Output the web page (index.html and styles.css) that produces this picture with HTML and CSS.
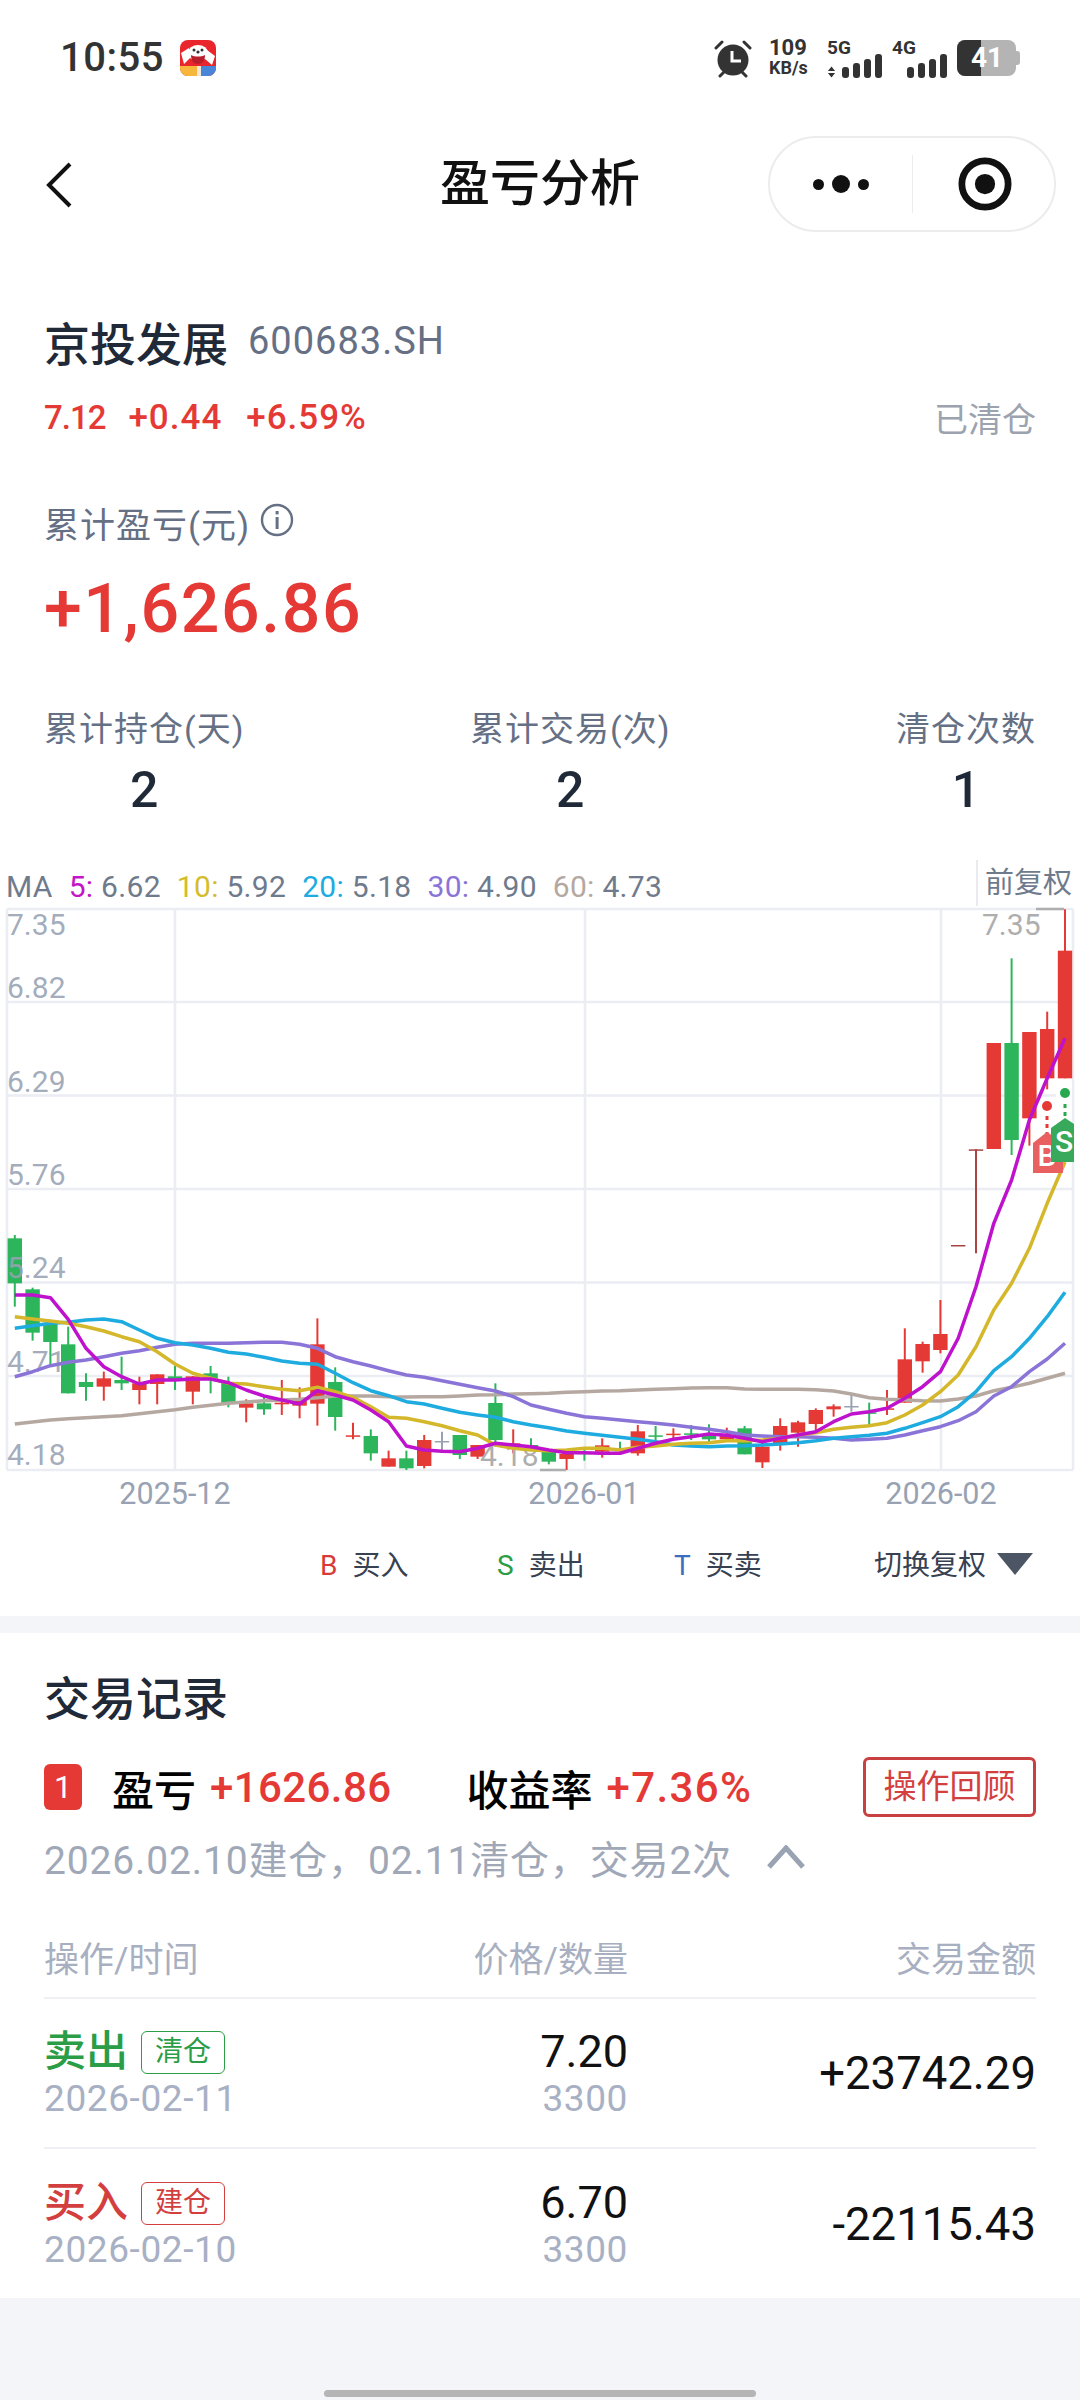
FILE: index.html
```html
<!DOCTYPE html>
<html lang="zh">
<head>
    <meta charset="UTF-8">
    <meta name="viewport" content="width=device-width, initial-scale=1.0">
    <title>盈亏分析</title>
    <link rel="stylesheet" href="styles.css">
</head>
<body>
    <div class="status-bar">
        <div class="status-left">
            <span class="clock">10:55</span>
            <svg class="app-icon" viewBox="0 0 36 36">
                <rect width="36" height="36" rx="8" fill="#e8262c"/>
                <path d="M0 26h17v10H8a8 8 0 0 1-8-8z" fill="#f6b73c"/>
                <path d="M21 26h15v2a8 8 0 0 1-8 8h-7z" fill="#4a86d8"/>
                <path d="M17 26h4v10h-4z" fill="#f4e6d8"/>
                <path d="M1 13l8-5 2 9-7 7zM35 16l-8-6-2 9 7 6z" fill="#fff"/>
                <ellipse cx="18" cy="13" rx="10" ry="8" fill="#fff"/>
                <path d="M11 15c4 2 10 2 14 0 0 6-3 9-7 9s-7-3-7-9z" fill="#b81f2a"/>
                <circle cx="14" cy="10" r="1.5" fill="#333"/>
                <circle cx="22" cy="10" r="1.5" fill="#333"/>
                <circle cx="18" cy="12" r="1.6" fill="#333"/>
            </svg>
        </div>
        <div class="status-right">
            <svg class="alarm" viewBox="0 0 38 38">
                <circle cx="19" cy="20" r="15.5" fill="#333"/>
                <path d="M2 8l6-6M36 8l-6-6M6 36l4-4M32 36l-4-4" stroke="#333" stroke-width="3" stroke-linecap="round"/>
                <path d="M18 11v10h9" fill="none" stroke="#fff" stroke-width="3"/>
            </svg>
            <div class="net-speed"><b>109</b><span>KB/s</span></div>
            <div class="signal">
                <b>5G</b>
                <svg class="updown" viewBox="0 0 10 12"><path d="M5 0l4 5H1zM5 12l4-5H1z" fill="#333"/></svg>
                <span class="bars">
                    <i class="b1"></i><i class="b2"></i><i class="b3"></i><i class="b4"></i>
                </span>
            </div>
            <div class="signal sim2">
                <b>4G</b>
                <span class="bars">
                    <i class="b1"></i><i class="b2"></i><i class="b3"></i><i class="b4"></i>
                </span>
            </div>
            <div class="battery"><div class="battery-fill"></div><span>41</span></div>
        </div>
    </div>

    <div class="nav-bar">
        <svg class="back" viewBox="0 0 28 46"><path d="M25 2L4 23l21 21" fill="none" stroke="#111" stroke-width="4"/></svg>
        <div class="nav-title">盈亏分析</div>
        <div class="capsule">
            <div class="capsule-part">
                <span class="dot small"></span><span class="dot"></span><span class="dot small"></span>
            </div>
            <div class="capsule-line"></div>
            <div class="capsule-part">
                <svg class="target" viewBox="0 0 56 56">
                    <circle cx="28" cy="28" r="24" fill="none" stroke="#111" stroke-width="7"/>
                    <circle cx="28" cy="28" r="10.5" fill="#111"/>
                </svg>
            </div>
        </div>
    </div>

    <section class="summary">
        <div class="stock-head">
            <span class="stock-name">京投发展</span>
            <span class="stock-code">600683.SH</span>
        </div>
        <div class="quote-row">
            <div class="quote">
                <span class="q-price">7.12</span>
                <span>+0.44</span>
                <span>+6.59%</span>
            </div>
            <span class="quote-state">已清仓</span>
        </div>
        <div class="profit-label">
            累计盈亏(元)
            <svg class="info" viewBox="0 0 34 34">
                <circle cx="17" cy="17" r="15" fill="none" stroke="#667085" stroke-width="2.4"/>
                <rect x="15.6" y="14" width="3" height="12" fill="#667085"/>
                <rect x="15.6" y="8" width="3" height="3.4" fill="#667085"/>
            </svg>
        </div>
        <div class="profit-value">+1,626.86</div>
        <div class="stats">
            <div class="stat"><div class="stat-label">累计持仓(天)</div><div class="stat-num">2</div></div>
            <div class="stat"><div class="stat-label">累计交易(次)</div><div class="stat-num">2</div></div>
            <div class="stat"><div class="stat-label">清仓次数</div><div class="stat-num">1</div></div>
        </div>
    </section>

    <section class="chart-box">
        <div class="ma-row">
            <div class="ma-list">
                <span>MA</span>
                <span class="ma-item"><em class="c5">5:</em> 6.62</span>
                <span class="ma-item"><em class="c10">10:</em> 5.92</span>
                <span class="ma-item"><em class="c20">20:</em> 5.18</span>
                <span class="ma-item"><em class="c30">30:</em> 4.90</span>
                <span class="ma-item"><em class="c60">60:</em> 4.73</span>
            </div>
            <div class="adjust">前复权</div>
        </div>
        <svg class="kline" viewBox="0 905 1080 610">
            <g class="grid">
                <path d="M7 909H1073M7 1002H1073M7 1095.5H1073M7 1189H1073M7 1282.5H1073M7 1376H1073M7 1470H1073"/>
                <path d="M7 909V1470M175 909V1470M585 909V1470M941 909V1470M1073 909V1470"/>
            </g>
            <g id="candles"></g>
            <g class="axis-y">
                <text x="7" y="935">7.35</text>
                <text x="7" y="998">6.82</text>
                <text x="7" y="1092">6.29</text>
                <text x="7" y="1185">5.76</text>
                <text x="7" y="1278">5.24</text>
                <text x="7" y="1372">4.71</text>
                <text x="7" y="1465">4.18</text>
            </g>
            <g class="extreme">
                <path d="M1036 909H1064M540 1470H566"/>
                <text x="982" y="935">7.35</text>
                <text x="480" y="1466">4.18</text>
            </g>
            <g id="lines"></g>
            <g class="trades">
                <rect x="1056" y="1082" width="16" height="36" fill="#fff"/>
                <circle cx="1047" cy="1106" r="5" fill="#e53935"/>
                <path d="M1047 1116V1134" stroke="#e53935" stroke-width="3" stroke-dasharray="4 4"/>
                <polygon points="1033,1143 1047,1132 1063,1143 1063,1173 1033,1173" fill="#e96060"/>
                <text x="1047" y="1166" class="tag-text">B</text>
                <circle cx="1065" cy="1093" r="5" fill="#2aa84f"/>
                <path d="M1065 1104V1118" stroke="#2aa84f" stroke-width="3" stroke-dasharray="4 4"/>
                <polygon points="1051,1128 1065,1118 1074,1124 1074,1162 1051,1162" fill="#38a95a"/>
                <text x="1064" y="1152" class="tag-text">S</text>
            </g>
            <g class="axis-x">
                <text x="175" y="1504">2025-12</text>
                <text x="584" y="1504">2026-01</text>
                <text x="941" y="1504">2026-02</text>
            </g>
        </svg>
        <div class="legend">
            <span class="legend-item"><b class="l-buy">B</b>买入</span>
            <span class="legend-item"><b class="l-sell">S</b>卖出</span>
            <span class="legend-item"><b class="l-both">T</b>买卖</span>
            <span class="legend-switch">切换复权<i class="tri"></i></span>
        </div>
    </section>

    <section class="records">
        <h2>交易记录</h2>
        <div class="round-head">
            <span class="round-no">1</span>
            <span class="round-key">盈亏</span>
            <span class="round-val">+1626.86</span>
            <span class="round-key rate">收益率</span>
            <span class="round-val pct">+7.36%</span>
            <span class="review">操作回顾</span>
        </div>
        <div class="round-sub">
            <span>2026.02.10建仓，02.11清仓，交易2次</span>
            <svg class="fold" viewBox="0 0 40 24"><path d="M3 22L20 3l17 19" fill="none" stroke="#9aa3b2" stroke-width="5"/></svg>
        </div>
        <div class="t-head">
            <span>操作/时间</span>
            <span>价格/数量</span>
            <span>交易金额</span>
        </div>
        <div class="t-row">
            <div class="t-op">
                <div class="t-op-top sell"><span class="t-side">卖出</span><span class="t-tag">清仓</span></div>
                <div class="t-sub">2026-02-11</div>
            </div>
            <div class="t-price"><div class="t-main">7.20</div><div class="t-sub">3300</div></div>
            <div class="t-amount">+23742.29</div>
        </div>
        <div class="t-row">
            <div class="t-op">
                <div class="t-op-top buy"><span class="t-side">买入</span><span class="t-tag">建仓</span></div>
                <div class="t-sub">2026-02-10</div>
            </div>
            <div class="t-price"><div class="t-main">6.70</div><div class="t-sub">3300</div></div>
            <div class="t-amount">-22115.43</div>
        </div>
    </section>

    <div class="home-area"><div class="home-bar"></div></div>

    <script src="chart.js"></script>
</body>
</html>
```

FILE: styles.css
```css
* {
    box-sizing: border-box;
}
body {
    margin: 0;
    width: 1080px;
    height: 2400px;
    background-color: #f4f5f9;
    font-family: Roboto, "Noto Sans CJK SC", sans-serif;
    color: #1f2937;
    display: flex;
    flex-direction: column;
    overflow: hidden;
}

/* status bar */
.status-bar {
    height: 116px;
    background-color: #fff;
    display: flex;
    justify-content: space-between;
    padding: 40px 61px 0 60px;
    color: #333;
}
.status-left {
    display: flex;
    align-items: flex-start;
    gap: 16px;
}
.clock {
    font-size: 40px;
    font-weight: 500;
    line-height: 36px;
    letter-spacing: 0.5px;
}
.app-icon {
    width: 36px;
    height: 36px;
}
.status-right {
    display: flex;
    align-items: flex-start;
    position: relative;
    width: 305px;
}
.alarm {
    width: 38px;
    height: 38px;
    margin-right: 17px;
}
.net-speed {
    width: 58px;
    display: flex;
    flex-direction: column;
    margin-top: -2px;
    line-height: 20px;
}
.net-speed b {
    font-size: 22px;
    font-weight: 700;
}
.net-speed span {
    font-size: 18px;
    font-weight: 700;
}
.signal {
    width: 54px;
    height: 38px;
    position: relative;
}
.signal b {
    position: absolute;
    left: 0;
    top: 0;
    font-size: 19px;
    line-height: 16px;
}
.sim2 {
    margin-left: 11px;
}
.updown {
    position: absolute;
    left: 0;
    bottom: 0;
    width: 9px;
    height: 12px;
}
.bars {
    position: absolute;
    left: 15px;
    bottom: 0;
    display: flex;
    align-items: flex-end;
    gap: 4px;
}
.bars i {
    width: 7px;
    background-color: #333;
    border-radius: 3px;
}
.bars .b1 { height: 11px; }
.bars .b2 { height: 15px; }
.bars .b3 { height: 19px; }
.bars .b4 { height: 24px; }
.battery {
    position: relative;
    width: 59px;
    height: 36px;
    margin-left: 11px;
    border-radius: 8px;
    background-color: #b4b4b4;
    overflow: visible;
}
.battery::after {
    content: "";
    position: absolute;
    right: -4px;
    top: 11px;
    width: 4px;
    height: 14px;
    border-radius: 0 3px 3px 0;
    background-color: #b4b4b4;
}
.battery-fill {
    width: 24px;
    height: 36px;
    background-color: #333;
    border-radius: 8px 0 0 8px;
}
.battery span {
    position: absolute;
    left: 14px;
    top: 0;
    font-size: 28px;
    line-height: 36px;
    font-weight: 700;
    color: #fff;
}

/* nav */
.nav-bar {
    height: 138px;
    background-color: #fff;
    position: relative;
    display: flex;
    align-items: flex-start;
    justify-content: space-between;
    padding: 20px 24px 0 45px;
}
.back {
    width: 28px;
    height: 46px;
    margin-top: 26px;
}
.nav-title {
    position: absolute;
    left: 0;
    right: 0;
    top: 36px;
    text-align: center;
    font-size: 50px;
    line-height: 64px;
    font-weight: 500;
    color: #111;
}
.capsule {
    width: 288px;
    height: 96px;
    border: 2px solid #ececec;
    border-radius: 48px;
    display: flex;
    align-items: center;
}
.capsule-part {
    flex: 1;
    display: flex;
    align-items: center;
    justify-content: center;
    gap: 8px;
}
.capsule-line {
    width: 1px;
    height: 58px;
    background-color: #ececec;
}
.dot {
    width: 18px;
    height: 18px;
    border-radius: 50%;
    background-color: #111;
}
.dot.small {
    width: 11px;
    height: 11px;
}
.target {
    width: 54px;
    height: 54px;
    margin-left: 3px;
}

/* summary */
.summary {
    height: 606px;
    background-color: #fff;
    padding: 60px 44px 0 44px;
}
.stock-head {
    display: flex;
    align-items: center;
    gap: 20px;
    height: 54px;
}
.stock-name {
    font-size: 46px;
    font-weight: 500;
}
.stock-code {
    font-size: 38px;
    color: #667085;
    letter-spacing: 1px;
}
.quote-row {
    display: flex;
    justify-content: space-between;
    align-items: center;
    margin-top: 24px;
    height: 50px;
}
.quote {
    display: flex;
    gap: 24px;
    font-size: 35px;
    font-weight: 500;
    color: #e53935;
    letter-spacing: 1px;
}
.q-price {
    font-size: 33px;
    letter-spacing: -1px;
    line-height: 41px;
    margin-right: -1px;
}
.quote-state {
    font-size: 34px;
    color: #9ca3af;
}
.profit-label {
    display: flex;
    align-items: center;
    gap: 10px;
    margin-top: 58px;
    height: 44px;
    font-size: 35px;
    letter-spacing: 1px;
    color: #667085;
}
.info {
    width: 34px;
    height: 34px;
    margin-top: -4px;
}
.profit-value {
    margin-top: 25px;
    font-size: 68px;
    line-height: 80px;
    font-weight: 500;
    color: #e53935;
    letter-spacing: 1.6px;
}
.stats {
    display: flex;
    justify-content: space-between;
    margin-top: 58px;
}
.stat {
    text-align: center;
}
.stat-label {
    font-size: 34px;
    line-height: 44px;
    color: #667085;
    letter-spacing: 1px;
}
.stat-num {
    margin-top: 9px;
    font-size: 50px;
    line-height: 60px;
    font-weight: 500;
}

/* chart */
.chart-box {
    height: 756px;
    background-color: #fff;
    margin-bottom: 17px;
    flex: none;
}
.ma-row {
    height: 45px;
    display: flex;
    justify-content: space-between;
    padding: 8px 8px 0 6px;
    font-size: 30px;
    line-height: 38px;
    color: #6f7b8c;
}
.ma-list {
    display: flex;
    gap: 16px;
    letter-spacing: 0.3px;
}
.ma-item em {
    font-style: normal;
}
.c5 { color: #c414c8; }
.c10 { color: #d4bd2c; }
.c20 { color: #1eabdf; }
.c30 { color: #8a74d8; }
.c60 { color: #b5a8a0; }
.adjust {
    width: 96px;
    height: 46px;
    margin-top: -8px;
    padding-left: 7px;
    font-size: 29px;
    line-height: 46px;
    white-space: nowrap;
    border-left: 2px solid #e9ebf1;
    color: #6f7b8c;
}
.kline {
    display: block;
    width: 1080px;
    height: 610px;
}
.grid path {
    fill: none;
    stroke: #ecedf3;
    stroke-width: 2.6;
}
.axis-y text {
    font-size: 30px;
    fill: #98a2b3;
    fill-opacity: 0.9;
}
.axis-x text {
    font-size: 30.5px;
    fill: #98a2b3;
    text-anchor: middle;
}
.extreme text {
    font-size: 30px;
    fill: #aeaeae;
}
.extreme path {
    fill: none;
    stroke: #aeaeae;
    stroke-width: 2.5;
}
.tag-text {
    font-size: 30px;
    font-weight: 500;
    fill: #fff;
    text-anchor: middle;
}
.legend {
    height: 101px;
    padding-top: 31px;
    display: flex;
    font-size: 28px;
    line-height: 40px;
    color: #374151;
}
.legend-item {
    display: flex;
    width: 177px;
    gap: 15px;
}
.legend-item:first-child {
    margin-left: 320px;
}
.legend-item b {
    font-weight: 400;
}
.l-buy { color: #d83a3a; }
.l-sell { color: #2a9d46; }
.l-both { color: #3a6fc0; }
.legend-switch {
    display: flex;
    margin-left: 23px;
    gap: 11px;
}
.tri {
    width: 0;
    height: 0;
    margin-top: 7px;
    border-left: 18px solid transparent;
    border-right: 18px solid transparent;
    border-top: 22px solid #4b5563;
}

/* trade records */
.records {
    height: 665px;
    background-color: #fff;
    padding: 0 44px;
    flex: none;
}
.records h2 {
    margin: 0;
    padding-top: 36px;
    font-size: 46px;
    line-height: 60px;
    font-weight: 500;
}
.round-head {
    display: flex;
    align-items: center;
    margin-top: 28px;
    height: 60px;
}
.round-no {
    width: 38px;
    height: 46px;
    background-color: #e53935;
    color: #fff;
    border-radius: 6px;
    text-align: center;
    font-size: 32px;
    line-height: 46px;
    margin-right: 30px;
}
.round-key {
    font-size: 42px;
    font-weight: 500;
    color: #000;
    margin-right: 14px;
}
.round-key.rate {
    margin-left: 75px;
}
.round-val {
    font-size: 42px;
    font-weight: 500;
    color: #e53935;
    letter-spacing: 0.4px;
}
.round-val.pct {
    letter-spacing: 1.4px;
}
.review {
    margin-left: auto;
    width: 173px;
    height: 60px;
    border: 3px solid #c94040;
    border-radius: 6px;
    color: #d33f3f;
    text-align: center;
    font-size: 33px;
    line-height: 54px;
}
.round-sub {
    display: flex;
    align-items: center;
    margin-top: 15px;
    gap: 34px;
    height: 50px;
    font-size: 39px;
    letter-spacing: 0.85px;
    color: #a0a8b8;
}
.fold {
    width: 40px;
    height: 24px;
}
.t-head {
    display: grid;
    grid-template-columns: 240px 344px 1fr;
    margin-top: 55px;
    padding-bottom: 12px;
    font-size: 35px;
    line-height: 48px;
    color: #a8afc0;
    border-bottom: 2px solid #eef0f3;
}
.t-head span:nth-child(2) {
    text-align: right;
}
.t-head span:nth-child(3) {
    text-align: right;
}
.t-row {
    display: grid;
    grid-template-columns: 240px 344px 1fr;
    align-items: center;
    height: 150px;
    border-bottom: 2px solid #eef0f3;
}
.t-row:last-child {
    border-bottom: none;
}
.t-op-top {
    display: flex;
    align-items: center;
    gap: 13px;
}
.t-side {
    font-size: 42px;
    line-height: 50px;
    font-weight: 500;
}
.t-tag {
    width: 84px;
    height: 43px;
    border: 1.5px solid;
    border-radius: 6px;
    text-align: center;
    font-size: 28px;
    line-height: 40px;
}
.sell { color: #2a9d46; }
.buy { color: #d33f3f; }
.t-sub {
    margin-top: 2px;
    font-size: 37px;
    line-height: 40px;
    letter-spacing: 0.6px;
    color: #a8b0c4;
}
.t-price {
    text-align: right;
}
.t-main {
    font-size: 45px;
    line-height: 50px;
    color: #111;
}
.t-amount {
    text-align: right;
    font-size: 45.5px;
    color: #111;
}

/* gesture bar */
.home-area {
    flex: 1;
    display: flex;
    align-items: flex-end;
    justify-content: center;
    padding-bottom: 3px;
}
.home-bar {
    width: 432px;
    height: 7px;
    border-radius: 4px;
    background-color: #b5b5b5;
}
```

FILE: chart.js
```javascript
// y values are measured from the gridline layout: page y = 1160 + v / 3
const toY = v => 1160 + v / 3;
const toX = i => 14.8 + 17.8 * i;

const RED = "#e53935", GREEN = "#2cb55a", GRAY = "#98a2b3", DARK = "#a94442";

// colour, wick top, body top, body bottom, wick bottom
const candles = [
    [GREEN, 225, 235, 370, 440], [GREEN, 383, 388, 518, 542], [GREEN, 488, 490, 546, 612],
    [GREEN, 500, 553, 700, 700], [GREEN, 640, 666, 681, 722], [RED, 635, 655, 680, 722],
    [GREEN, 590, 660, 670, 690], [RED, 650, 670, 690, 733], [RED, 643, 643, 672, 733],
    [GREEN, 618, 649, 658, 690], [RED, 648, 649, 695, 733], [GREEN, 618, 640, 660, 700],
    [GREEN, 650, 668, 730, 742], [RED, 718, 730, 743, 787], [GREEN, 708, 730, 748, 764],
    [RED, 660, 728, 733, 765], [RED, 682, 722, 737, 775], [RED, 475, 553, 731, 797],
    [GREEN, 622, 666, 771, 812], [RED, 788, 826, 830, 838], [GREEN, 808, 828, 880, 902],
    [RED, 872, 895, 920, 920], [GREEN, 872, 895, 925, 930], [RED, 825, 840, 918, 925],
    [GRAY, 815, 843, 845, 870], [GREEN, 825, 825, 885, 897], [RED, 855, 855, 890, 897],
    [GREEN, 670, 729, 840, 860], [RED, 808, 850, 860, 880], [GREEN, 835, 855, 860, 870],
    [GREEN, 870, 876, 905, 913], [RED, 870, 882, 897, 930], [GREEN, 870, 878, 880, 902],
    [RED, 835, 856, 875, 893], [GREEN, 845, 868, 870, 875], [RED, 795, 814, 880, 887],
    [GREEN, 798, 826, 828, 845], [RED, 805, 821, 824, 835], [GREEN, 795, 820, 823, 840],
    [GREEN, 793, 825, 838, 850], [RED, 803, 825, 838, 845], [GREEN, 798, 805, 883, 883],
    [RED, 845, 860, 907, 924], [RED, 775, 798, 850, 872], [RED, 782, 787, 818, 860],
    [RED, 745, 750, 792, 815], [RED, 733, 739, 748, 770], [GRAY, 705, 738, 740, 755],
    [GREEN, 728, 757, 759, 800], [RED, 690, 745, 747, 765], [RED, 505, 598, 728, 728],
    [RED, 545, 552, 604, 638], [RED, 420, 522, 570, 580], [DARK, 255, 255, 257, 257],
    [DARK, -32, -32, -30, 280], [RED, -351, -351, -33, -33], [GREEN, -605, -351, -60, -15],
    [RED, -384, -384, -125, -43], [RED, -445, -393, -245, -212], [RED, -752, -628, -245, -245]
];

const lines = [
    ["#b5a8a0", [792, 786, 780, 776, 773, 770, 767, 761, 755, 749, 742, 736, 730, 726, 722, 720, 718, 713, 708, 708, 708, 710, 711, 710, 710, 708, 705, 704, 702, 701,
        700, 697, 695, 693, 692, 690, 688, 686, 684, 683, 683, 687, 688, 688, 688, 689, 693, 702, 713, 718, 720, 722, 723, 717, 708, 692, 682, 670, 655, 640]],
    ["#8a74d8", [650, 635, 617, 607, 600, 590, 580, 572, 562, 553, 550, 550, 550, 548, 547, 547, 553, 565, 590, 605, 618, 632, 645, 652, 662, 673, 683, 693, 710, 735,
        748, 760, 770, 775, 780, 785, 790, 795, 802, 808, 815, 825, 828, 830, 830, 832, 835, 840, 838, 835, 825, 812, 800, 782, 755, 708, 680, 635, 597, 550]],
    ["#1eabdf", [505, 497, 490, 487, 480, 477, 485, 510, 535, 548, 555, 565, 577, 582, 592, 603, 610, 613, 640, 668, 692, 707, 725, 732, 745, 757, 765, 772, 785, 795,
        803, 813, 820, 826, 832, 838, 845, 855, 858, 860, 858, 857, 855, 852, 848, 842, 835, 830, 826, 820, 805, 788, 770, 740, 695, 632, 590, 535, 470, 397]],
    ["#d4b72a", [470, 477, 483, 490, 500, 513, 530, 545, 575, 612, 640, 655, 670, 672, 680, 688, 692, 682, 695, 712, 740, 772, 775, 785, 797, 812, 825, 855, 865, 870,
        872, 870, 865, 865, 870, 862, 858, 853, 850, 848, 842, 842, 840, 835, 825, 818, 808, 802, 797, 788, 765, 735, 695, 645, 560, 450, 370, 265, 130, 6]],
    ["#bf12cc", [405, 405, 413, 478, 565, 620, 650, 672, 660, 660, 657, 657, 668, 690, 708, 720, 732, 692, 705, 720, 750, 785, 858, 870, 874, 875, 865, 850, 855, 860,
        870, 878, 878, 880, 880, 865, 850, 838, 830, 822, 826, 835, 845, 835, 825, 815, 785, 762, 755, 745, 715, 680, 635, 535, 380, 190, 60, -120, -245, -365]]
];

const NS = "http://www.w3.org/2000/svg";
function add(parent, tag, attrs) {
    const el = document.createElementNS(NS, tag);
    Object.keys(attrs).forEach(k => el.setAttribute(k, attrs[k]));
    parent.appendChild(el);
}

const candleGroup = document.getElementById("candles");
candles.forEach((c, i) => {
    const x = toX(i);
    add(candleGroup, "line", { x1: x, x2: x, y1: toY(c[1]), y2: toY(c[4]), stroke: c[0], "stroke-width": 2 });
    add(candleGroup, "rect", { x: x - 7.2, y: toY(c[2]), width: 14.4, height: Math.max((c[3] - c[2]) / 3, 1.5), fill: c[0] });
});

const lineGroup = document.getElementById("lines");
lines.forEach(l => {
    const points = l[1].map((v, i) => toX(i).toFixed(1) + "," + toY(v).toFixed(1)).join(" ");
    add(lineGroup, "polyline", { points: points, fill: "none", stroke: l[0], "stroke-width": 3.5, "stroke-linejoin": "round" });
});
```
